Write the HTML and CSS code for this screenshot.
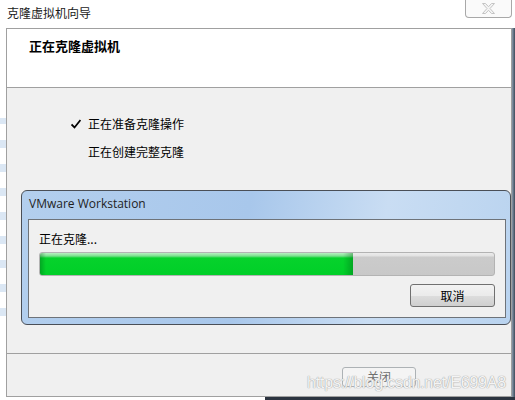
FILE: index.html
```html
<!DOCTYPE html>
<html lang="zh-CN">
<head>
    <meta charset="UTF-8">
    <title>克隆虚拟机向导</title>
    <link rel="stylesheet" href="styles.css">
</head>
<body>
    <div class="screen">
        <div class="titlebar">
            <span class="title">克隆虚拟机向导</span>
            <span class="close-btn">
                <svg width="15" height="11" viewBox="0 0 15 11">
                    <path d="M1.5 0.5h3l3 3.2 3-3.2h3l-4.5 5 4.5 5h-3l-3-3.2-3 3.2h-3l4.5-5z" fill="#f4f4f4" stroke="#c4c4c4" stroke-width="1"/>
                </svg>
            </span>
        </div>

        <div class="main">
            <div class="edge-left"></div>
            <div class="frame">
                <div class="header">正在克隆虚拟机</div>

                <div class="content">
                    <div class="step">
                        <span class="check">
                            <svg width="10" height="10" viewBox="0 0 10 10">
                                <path d="M0.5 5.5 L3.5 8.5 L9.5 1" fill="none" stroke="#000" stroke-width="1.8"/>
                            </svg>
                        </span>
                        <span>正在准备克隆操作</span>
                    </div>
                    <div class="step">
                        <span class="check"></span>
                        <span>正在创建完整克隆</span>
                    </div>

                    <div class="dialog">
                        <div class="dialog-title">VMware Workstation</div>
                        <div class="dialog-body">
                            <div class="status">正在克隆...</div>
                            <div class="progress">
                                <div class="progress-fill" style="width: 69%"></div>
                            </div>
                            <div class="dialog-actions">
                                <button class="btn">取消</button>
                            </div>
                        </div>
                    </div>
                </div>

                <div class="footer">
                    <button class="btn btn-close" disabled>关闭</button>
                    <span class="watermark">https://blog.csdn.net/E699A8</span>
                </div>
            </div>
            <div class="edge-right"></div>
        </div>
        <div class="bottom-strip"></div>
    </div>
</body>
</html>
```

FILE: styles.css
```css
body {
    margin: 0;
    background: #fff;
    font-family: "Noto Sans CJK SC", "Liberation Sans", sans-serif;
    font-size: 12px;
    color: #000;
}

.screen {
    width: 515px;
    height: 400px;
    overflow: hidden;
}

.titlebar {
    height: 28px;
    display: flex;
    justify-content: space-between;
    align-items: flex-start;
}

.title {
    padding: 5px 0 0 7px;
    line-height: 16px;
    color: #1a1a1a;
}

.close-btn {
    width: 45px;
    height: 17px;
    margin-right: 3px;
    border: 1px solid #a8a8a8;
    border-top: none;
    border-radius: 0 0 4px 4px;
    display: flex;
    justify-content: center;
    align-items: center;
    background: #fafafa;
}

.main {
    display: flex;
    height: 369px;
}

.edge-left {
    width: 6px;
    background:
        linear-gradient(180deg, #fff 0, #fff 90px, rgba(255, 255, 255, 0) 90px, rgba(255, 255, 255, 0) 300px, #fff 300px),
        repeating-linear-gradient(180deg, #fff 0, #fff 16px, #dbe7f4 16px, #dbe7f4 24px);
}

.frame {
    width: 504px;
    border: 1px solid #a0a0a0;
    background: #f0f0f0;
    display: flex;
    flex-direction: column;
}

.edge-right {
    width: 3px;
    background: linear-gradient(90deg, #8b9aab, #3c4a5a);
}

.header {
    flex-shrink: 0;
    height: 59px;
    background: #fff;
    border-bottom: 1px solid #a0a0a0;
    padding: 9px 0 0 22px;
    box-sizing: border-box;
    font-size: 13px;
    font-weight: bold;
    line-height: 16px;
}

.content {
    flex-shrink: 0;
    height: 266px;
    border-bottom: 1px solid #a0a0a0;
    padding-top: 28px;
    box-sizing: border-box;
}

.step {
    display: flex;
    align-items: center;
    padding-left: 64px;
    height: 16px;
    line-height: 16px;
}

.step + .step {
    margin-top: 12px;
}

.check {
    width: 17px;
    display: flex;
    align-items: center;
}

.dialog {
    margin: 30px 0 0 14px;
    width: 478px;
    border: 1px solid #4a4f57;
    border-radius: 6px;
    background: linear-gradient(100deg, #b3cfee 0%, #a8c7eb 45%, #c9ddf3 72%, #b9d3ef 100%);
    padding: 0 4px 6px 6px;
}

.dialog-title {
    height: 28px;
    padding: 5px 0 0 1px;
    box-sizing: border-box;
    font-family: "Open Sans", "Noto Sans", sans-serif;
    font-size: 12px;
    line-height: 16px;
    color: #1e1e1e;
}

.dialog-body {
    border: 1px solid #6e7379;
    background: #f0f0f0;
    padding: 11px 10px 10px 10px;
}

.status {
    height: 16px;
    line-height: 16px;
    margin-bottom: 5px;
}

.progress {
    height: 22px;
    border: 1px solid #b3b3b3;
    border-radius: 3px;
    background: linear-gradient(180deg, #ececec 0, #e2e2e2 3px, #cbcbcb 4px, #c8c8c8 100%);
    overflow: hidden;
}

.progress-fill {
    height: 100%;
    background:
        linear-gradient(90deg, rgba(0, 90, 20, 0.35) 0, rgba(0, 90, 20, 0) 6px, rgba(0, 90, 20, 0) calc(100% - 10px), rgba(0, 90, 20, 0.35) 100%),
        linear-gradient(180deg, #b9f0c2 0, #7be08e 3px, #06d22c 5px, #00cf28 100%);
}

.dialog-actions {
    display: flex;
    justify-content: flex-end;
    margin-top: 8px;
}

.btn {
    width: 85px;
    height: 23px;
    border: 1px solid #707070;
    border-radius: 3px;
    background: linear-gradient(180deg, #f2f2f2 0, #ebebeb 50%, #dddddd 51%, #cfcfcf 100%);
    font-family: "Noto Sans CJK SC", sans-serif;
    font-size: 12px;
    color: #000;
    padding: 0;
}

.footer {
    flex: 1;
    display: flex;
    justify-content: flex-end;
    align-items: flex-start;
    padding: 13px 95px 0 0;
    position: relative;
}

.btn-close {
    width: 74px;
    height: 20px;
    border-color: #adb2b5;
    background: #f4f4f4;
    color: #6f6f6f;
    line-height: 16px;
}

.watermark {
    position: absolute;
    right: 5px;
    top: 20px;
    font-family: "Liberation Sans", sans-serif;
    font-size: 16px;
    color: #f4f4f4;
    text-shadow: 0 0 1px #9a9a9a, 0 0 1px #b0b0b0;
    letter-spacing: -0.2px;
}

.bottom-strip {
    height: 3px;
    margin-left: 265px;
    background: #2c3440;
}
```
